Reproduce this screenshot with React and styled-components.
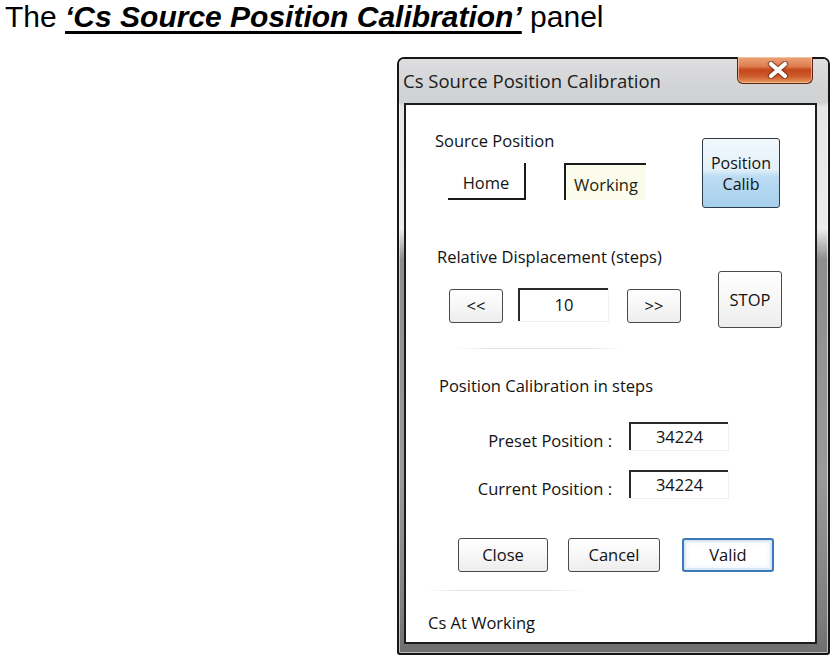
import React from "react";
import styled, { createGlobalStyle } from "styled-components";

const Global = createGlobalStyle`
  html, body { margin: 0; padding: 0; background: #ffffff; }
  body { width: 839px; height: 663px; overflow: hidden; }
  * { box-sizing: border-box; }
`;

const Page = styled.div`
  width: 839px;
  height: 663px;
  background: #fff;
  display: flex;
  flex-direction: column;
`;

const Heading = styled.h1`
  margin: 0;
  padding: 0 0 0 5px;
  font-family: "Liberation Sans", Arial, sans-serif;
  font-weight: 400;
  font-size: 30px;
  line-height: 34px;
  color: #000;
  white-space: nowrap;
`;

const Emph = styled.span`
  font-weight: 700;
  font-style: italic;
  text-decoration: underline;
  text-decoration-thickness: 2.5px;
  text-underline-offset: 4px;
`;

const Stage = styled.div`
  padding: 23px 0 0 397px;
`;

const Window = styled.div`
  width: 433px;
  height: 598px;
  border: 2px solid #161616;
  border-radius: 7px 7px 3px 3px;
  background:
    linear-gradient(180deg, #d9d9db 0px, #d2d2d4 44px, #e6e6e6 48px, #ececec 170px, #8e8e8e 200px, #9a9a9a 420px, #7d7d7d 560px, #6e6e6e 100%);
  display: flex;
  flex-direction: column;
  box-shadow: inset 0 0 0 1px rgba(255,255,255,0.55);
  font-family: "Open Sans", "Noto Sans", sans-serif;
  color: #121212;
`;

const TitleBar = styled.div`
  height: 44px;
  flex: none;
  display: flex;
  align-items: flex-start;
  padding: 0 15px 0 4px;
  background: linear-gradient(180deg, #dedee0 0%, #d3d4d6 60%, #d0d1d3 100%);
  border-radius: 5px 5px 0 0;
`;

const Title = styled.div`
  margin-top: 10px;
  font-size: 18.5px;
  line-height: 24px;
  color: #1b1b1b;
  white-space: nowrap;
`;

const CloseBtn = styled.div`
  margin-left: auto;
  margin-top: -2px;
  width: 76px;
  height: 27px;
  border: 1px solid #5a2410;
  border-top: none;
  border-radius: 0 0 6px 6px;
  background: linear-gradient(180deg, #e9a47a 0%, #df7f4f 35%, #c4461b 50%, #cf5d2d 75%, #e59a5e 100%);
  box-shadow: inset 0 0 0 1px rgba(255, 220, 190, 0.55);
  display: flex;
  align-items: center;
  justify-content: center;
  padding-left: 6px;
`;

const Client = styled.div`
  flex: 1;
  margin: 0 11px 11px 5px;
  border: 2px solid #1c1c1c;
  background: #fff;
  display: flex;
  flex-direction: column;
  padding-bottom: 9px;
`;

const Label = styled.div`
  font-size: 16.5px;
  line-height: 20px;
  white-space: nowrap;
  margin-top: ${(p) => p.$top || 0}px;
  margin-left: ${(p) => p.$left || 0}px;
`;

const SourceSection = styled.div`
  display: flex;
  align-items: flex-start;
  padding-left: 29px;
`;

const LeftCol = styled.div`
  width: 267px;
  display: flex;
  flex-direction: column;
`;

const ToggleRow = styled.div`
  display: flex;
  margin-top: 12px;
  padding-left: 13px;
  gap: 38px;
`;

const Toggle = styled.div`
  height: 37px;
  width: ${(p) => p.$w}px;
  display: flex;
  align-items: center;
  justify-content: center;
  padding-top: 4px;
  font-size: 16.5px;
  background: ${(p) => (p.$pressed ? "#fbfcec" : "#ffffff")};
  border-style: solid;
  border-color: #1a1a1a;
  border-width: ${(p) => (p.$pressed ? "2px 0 0 2px" : "0 2px 2px 0")};
  color: ${(p) => (p.$pressed ? "#1d2410" : "#141414")};
`;

const Button = styled.div`
  width: ${(p) => p.$w}px;
  height: ${(p) => p.$h}px;
  margin-top: ${(p) => p.$top || 0}px;
  flex: none;
  display: flex;
  flex-direction: column;
  align-items: center;
  justify-content: center;
  font-size: 16.5px;
  line-height: 20px;
  border: 1.5px solid #4a4a4a;
  border-radius: 3px;
  background: linear-gradient(180deg, #ffffff 0%, #f7f7f7 50%, #ededed 100%);
  color: #121212;
  white-space: nowrap;
`;

const BlueButton = styled(Button)`
  border: 1.5px solid #2f3b46;
  background: linear-gradient(180deg, #f2f8fc 0%, #e3f0f9 45%, #bcdcf2 55%, #a6d0ee 100%);
  padding-top: 1px;
`;

const CalibLine = styled.span`
  display: block;
  font-size: 16px;
  line-height: 21px;
  height: 21px;
`;

const DefaultButton = styled(Button)`
  border: 2px solid #3c78b4;
  background: #ffffff;
  box-shadow: inset 0 0 0 2px #d7e8f6, inset 0 0 6px 2px #e6f1fa;
`;

const DispRow = styled.div`
  display: flex;
  align-items: flex-start;
  margin-top: 4px;
  padding-left: 43px;
`;

const Field = styled.div`
  width: ${(p) => p.$w}px;
  height: ${(p) => p.$h}px;
  margin-top: ${(p) => p.$top || 0}px;
  margin-left: ${(p) => p.$left || 0}px;
  margin-right: ${(p) => p.$right || 0}px;
  flex: none;
  border-top: 2px solid #2a2a2a;
  border-left: 2px solid #2a2a2a;
  background: #fff;
  text-align: center;
  font-size: 16.5px;
  line-height: 20px;
  padding-top: ${(p) => p.$pt || 0}px;
  box-shadow: 1px 1px 0 #f0f0f0;
`;

const Separator = styled.div`
  height: 1px;
  width: ${(p) => p.$w}px;
  margin-top: ${(p) => p.$top}px;
  margin-left: ${(p) => p.$left}px;
  background: linear-gradient(90deg, rgba(225,225,225,0) 0%, #e4e4e4 20%, #e4e4e4 80%, rgba(225,225,225,0) 100%);
`;

const CalibRow = styled.div`
  display: flex;
  align-items: flex-start;
  margin-top: ${(p) => p.$top}px;
`;

const RowLabel = styled.div`
  width: 206px;
  text-align: right;
  font-size: 16.5px;
  line-height: 20px;
  margin-top: 9px;
  white-space: nowrap;
`;

const ActionRow = styled.div`
  display: flex;
  align-items: flex-start;
  margin-top: 39px;
  padding-left: 52px;
`;

const StatusText = styled.div`
  font-size: 16.5px;
  line-height: 20px;
  margin-top: 22px;
  margin-left: 22px;
`;

const CloseGlyph = () => (
  <svg width="22" height="18" viewBox="0 0 22 18">
    <path
      d="M4 3 L18 15 M18 3 L4 15"
      stroke="#5a2410"
      strokeWidth="6.5"
      strokeLinecap="round"
      opacity="0.55"
    />
    <path
      d="M4 3 L18 15 M18 3 L4 15"
      stroke="#ffffff"
      strokeWidth="4.2"
      strokeLinecap="round"
    />
  </svg>
);

export default function App() {
  return (
    <Page>
      <Global />
      <Heading>
        The <Emph>‘Cs Source Position Calibration’</Emph> panel
      </Heading>
      <Stage>
        <Window>
          <TitleBar>
            <Title>Cs Source Position Calibration</Title>
            <CloseBtn>
              <CloseGlyph />
            </CloseBtn>
          </TitleBar>
          <Client>
            <SourceSection>
              <LeftCol>
                <Label $top={26}>Source Position</Label>
                <ToggleRow>
                  <Toggle $w={78}>Home</Toggle>
                  <Toggle $w={82} $pressed>
                    Working
                  </Toggle>
                </ToggleRow>
              </LeftCol>
              <BlueButton $w={78} $h={70} $top={33}>
                <CalibLine>Position</CalibLine>
                <CalibLine>Calib</CalibLine>
              </BlueButton>
            </SourceSection>

            <Label $top={39} $left={31}>
              Relative Displacement (steps)
            </Label>
            <DispRow>
              <Button $w={54} $h={34} $top={18}>
                &lt;&lt;
              </Button>
              <Field $w={90} $h={33} $top={17} $left={15} $right={19} $pt={5}>
                10
              </Field>
              <Button $w={54} $h={34} $top={18}>
                &gt;&gt;
              </Button>
              <Button $w={64} $h={57} style={{ marginLeft: 37 }}>
                STOP
              </Button>
            </DispRow>
            <Separator $w={170} $top={20} $left={48} />

            <Label $top={27} $left={33}>
              Position Calibration in steps
            </Label>
            <CalibRow $top={26}>
              <RowLabel>Preset Position :</RowLabel>
              <Field $w={99} $h={28} $left={17} $pt={3}>
                34224
              </Field>
            </CalibRow>
            <CalibRow $top={19}>
              <RowLabel>Current Position :</RowLabel>
              <Field $w={99} $h={28} $left={17} $pt={3}>
                34224
              </Field>
            </CalibRow>

            <ActionRow>
              <Button $w={90} $h={34}>
                Close
              </Button>
              <Button $w={92} $h={34} style={{ marginLeft: 20 }}>
                Cancel
              </Button>
              <DefaultButton $w={92} $h={34} style={{ marginLeft: 22 }}>
                Valid
              </DefaultButton>
            </ActionRow>
            <Separator $w={160} $top={18} $left={20} />
            <StatusText>Cs At Working</StatusText>
          </Client>
        </Window>
      </Stage>
    </Page>
  );
}
